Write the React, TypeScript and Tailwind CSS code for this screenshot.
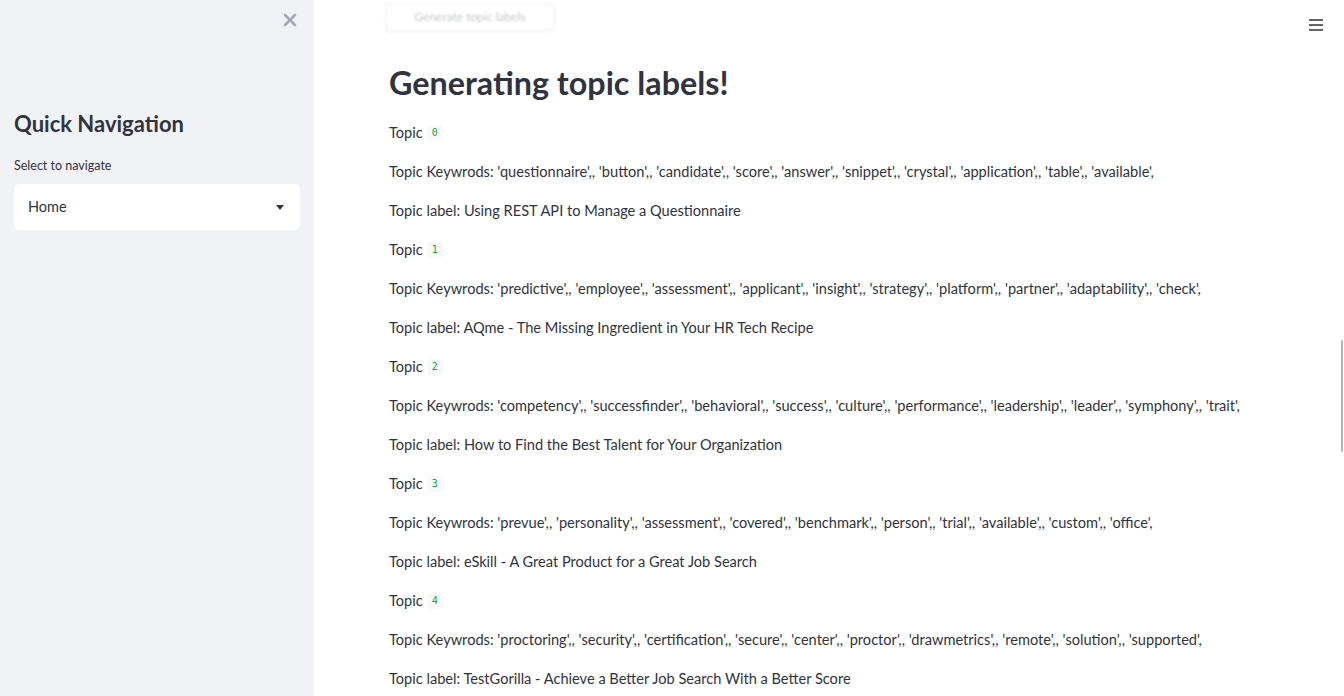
import React from 'react';

const topics = [
    {
        keywords: "'questionnaire',, 'button',, 'candidate',, 'score',, 'answer',, 'snippet',, 'crystal',, 'application',, 'table',, 'available',",
        label: 'Using REST API to Manage a Questionnaire',
    },
    {
        keywords: "'predictive',, 'employee',, 'assessment',, 'applicant',, 'insight',, 'strategy',, 'platform',, 'partner',, 'adaptability',, 'check',",
        label: 'AQme - The Missing Ingredient in Your HR Tech Recipe',
    },
    {
        keywords: "'competency',, 'successfinder',, 'behavioral',, 'success',, 'culture',, 'performance',, 'leadership',, 'leader',, 'symphony',, 'trait',",
        label: 'How to Find the Best Talent for Your Organization',
    },
    {
        keywords: "'prevue',, 'personality',, 'assessment',, 'covered',, 'benchmark',, 'person',, 'trial',, 'available',, 'custom',, 'office',",
        label: 'eSkill - A Great Product for a Great Job Search',
    },
    {
        keywords: "'proctoring',, 'security',, 'certification',, 'secure',, 'center',, 'proctor',, 'drawmetrics',, 'remote',, 'solution',, 'supported',",
        label: 'TestGorilla - Achieve a Better Job Search With a Better Score',
    },
];

const font = { fontFamily: 'Lato, "Open Sans", sans-serif' };

export default function App() {
    return (
        <div className="relative flex h-[696px] w-[1344px] overflow-hidden bg-white text-[#31333f]" style={font}>
            {/* Sidebar */}
            <aside className="relative flex w-[314px] shrink-0 flex-col bg-[#f0f2f6] px-[14px] pt-[108px]">
                <button className="absolute right-[16px] top-[12px] text-[#a3a8b4]">
                    <svg width="16" height="16" viewBox="0 0 16 16">
                        <path d="M3 3 L13 13 M13 3 L3 13" stroke="currentColor" strokeWidth="2.6" strokeLinecap="round" />
                    </svg>
                </button>
                <h2 className="text-[22px] font-bold leading-[32px]">Quick Navigation</h2>
                <p className="mt-[18px] text-[12.5px] leading-[16px]">Select to navigate</p>
                <div className="mt-[10px] flex h-[46px] items-center justify-between rounded-md bg-white pl-[14px] pr-[16px]">
                    <span className="text-[14.5px]">Home</span>
                    <svg width="8" height="5" viewBox="0 0 8 5">
                        <path d="M0 0 L8 0 L4 5 Z" fill="#31333f" />
                    </svg>
                </div>
            </aside>

            {/* Main */}
            <main className="relative flex-1 pl-[75px]">
                {/* faded stale element at top */}
                <div className="absolute left-[72px] top-[4px] flex h-[26px] w-[168px] items-center justify-center rounded border border-[#f3f3f5] shadow-[0_2px_6px_rgba(0,0,0,0.05)] blur-[1.2px]">
                    <span className="text-[12px] text-[#c4c5ca]">Generate topic labels</span>
                </div>

                <button className="absolute right-[20px] top-[18px]">
                    <svg width="16" height="14" viewBox="0 0 16 14">
                        <path d="M1 2 H15 M1 7 H15 M1 12 H15" stroke="#31333f" strokeWidth="1.6" />
                    </svg>
                </button>

                <h1 className="mt-[62px] text-[32.3px] font-bold leading-[42px]">Generating topic labels!</h1>

                <div className="mt-[19px] flex flex-col text-[14.6px] leading-[20px]">
                    {topics.map((t, i) => (
                        <React.Fragment key={i}>
                            <div className="mb-[19px] flex items-center gap-[4px]">
                                <span>Topic</span>
                                <code className="rounded bg-[#f8f8fa] px-[5px] py-[1px] text-[10px] leading-[14px] text-[#09ab3b]" style={{ fontFamily: '"DejaVu Sans Mono", monospace' }}>
                                    {i}
                                </code>
                            </div>
                            <p className="mb-[19px]">Topic Keywrods: {t.keywords}</p>
                            <p className="mb-[19px]">Topic label: {t.label}</p>
                        </React.Fragment>
                    ))}
                </div>

                {/* scrollbar thumb */}
                <div className="absolute right-[1px] top-[340px] h-[112px] w-[2px] rounded bg-[#b3b3b8]" />
            </main>
        </div>
    );
}
